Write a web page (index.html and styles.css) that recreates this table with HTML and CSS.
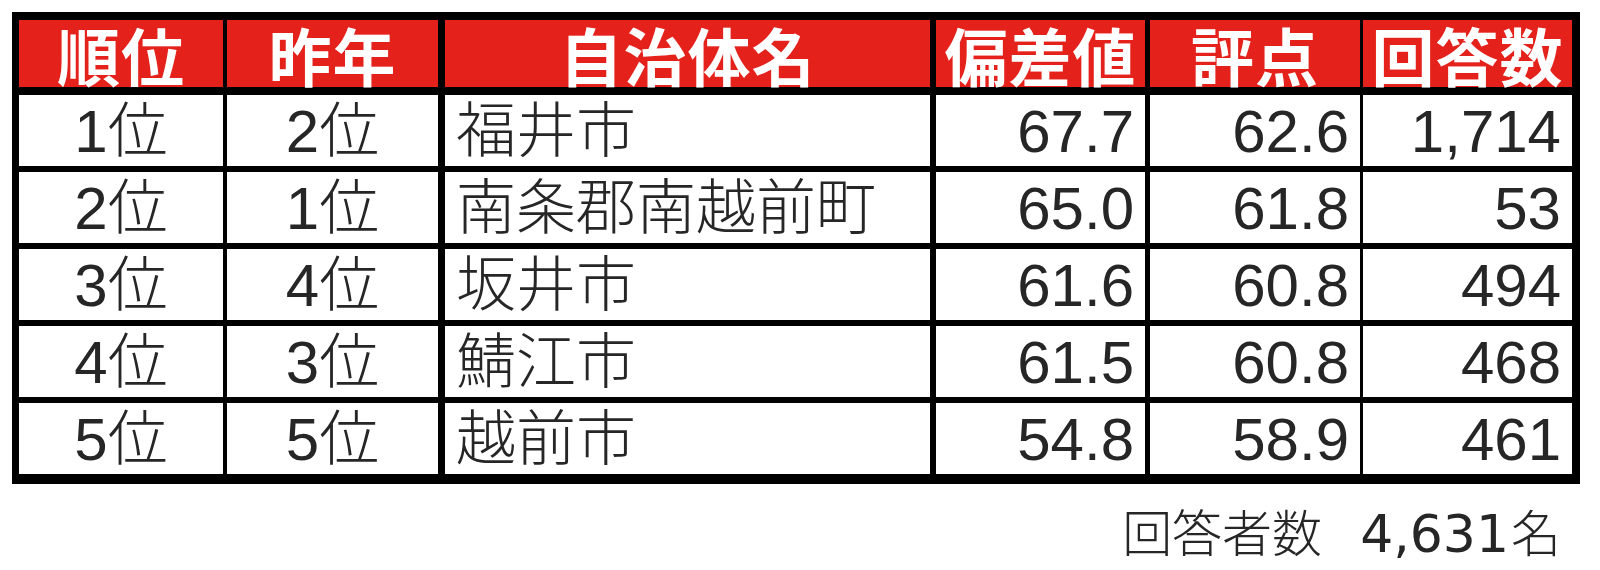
FILE: index.html
```html
<!DOCTYPE html>
<html lang="ja">
<head>
<meta charset="utf-8">
<title>ランキング</title>
<link rel="stylesheet" href="styles.css">
</head>
<body>
<div class="page">
  <div class="rank">
    <div class="cell head c1">順位</div>
    <div class="cell head c2">昨年</div>
    <div class="cell head c3">自治体名</div>
    <div class="cell head c4">偏差値</div>
    <div class="cell head c5">評点</div>
    <div class="cell head c6">回答数</div>

    <div class="cell first c1 center">1位</div>
    <div class="cell first c2 center">2位</div>
    <div class="cell first c3 left">福井市</div>
    <div class="cell first c4 right">67.7</div>
    <div class="cell first c5 right">62.6</div>
    <div class="cell first c6 right">1,714</div>

    <div class="cell row c1 center">2位</div>
    <div class="cell row c2 center">1位</div>
    <div class="cell row c3 left">南条郡南越前町</div>
    <div class="cell row c4 right">65.0</div>
    <div class="cell row c5 right">61.8</div>
    <div class="cell row c6 right">53</div>

    <div class="cell row c1 center">3位</div>
    <div class="cell row c2 center">4位</div>
    <div class="cell row c3 left">坂井市</div>
    <div class="cell row c4 right">61.6</div>
    <div class="cell row c5 right">60.8</div>
    <div class="cell row c6 right">494</div>

    <div class="cell row c1 center">4位</div>
    <div class="cell row c2 center">3位</div>
    <div class="cell row c3 left">鯖江市</div>
    <div class="cell row c4 right">61.5</div>
    <div class="cell row c5 right">60.8</div>
    <div class="cell row c6 right">468</div>

    <div class="cell row c1 center">5位</div>
    <div class="cell row c2 center">5位</div>
    <div class="cell row c3 left">越前市</div>
    <div class="cell row c4 right">54.8</div>
    <div class="cell row c5 right">58.9</div>
    <div class="cell row c6 right">461</div>
  </div>
  <div class="total"><span class="jp">回答者数</span><span class="num">4,631</span><span class="jp">名</span></div>
</div>
</body>
</html>
```

FILE: styles.css
```css
html, body {
  margin: 0;
  padding: 0;
  background: #ffffff;
}

.page {
  padding: 12px 0 0 12px;
  width: 1568px;
}

.rank {
  display: grid;
  grid-template-columns: 204px 215px 492px 215px 215px 212px;
  border-style: solid;
  border-color: #000;
  border-width: 8px 8px 10px 7px;
  width: 1568px;
  box-sizing: border-box;
  font-family: "Liberation Sans", "Noto Sans CJK JP", sans-serif;
  font-weight: 300;
  color: #262626;
}

.cell {
  box-sizing: border-box;
  display: flex;
  align-items: flex-end;
  font-size: 60px;
  line-height: 60px;
  white-space: nowrap;
  border-color: #000;
  border-style: solid;
  border-width: 0;
}

.c2 { border-left-width: 4px; }
.c3 { border-left-width: 7px; }
.c4 { border-left-width: 6px; }
.c5 { border-left-width: 5px; }
.c6 { border-left-width: 3px; }

.head {
  height: 75px;
  border-bottom-width: 8px;
  background: #e5211b;
  color: #ffffff;
  font-family: "Noto Sans CJK JP", sans-serif;
  font-weight: 700;
  font-size: 63px;
  line-height: 63px;
  align-items: center;
  justify-content: center;
  letter-spacing: 1px;
}

.first {
  height: 71px;
  padding-bottom: 4px;
}

.row {
  height: 77px;
  border-top-width: 6px;
  padding-bottom: 4px;
}

.center { justify-content: center; }
.left { justify-content: flex-start; padding-left: 11px; }
.right { justify-content: flex-end; padding-right: 11px; }

.total {
  display: flex;
  justify-content: flex-end;
  align-items: baseline;
  width: 1549px;
  margin-top: 10px;
  color: #262626;
}

.total .jp {
  font-family: "Noto Sans CJK JP", sans-serif;
  font-weight: 300;
  font-size: 50px;
}

.total .num {
  font-family: "DejaVu Sans", sans-serif;
  font-size: 52px;
  margin-left: 38px;
  margin-right: 2px;
}
```
